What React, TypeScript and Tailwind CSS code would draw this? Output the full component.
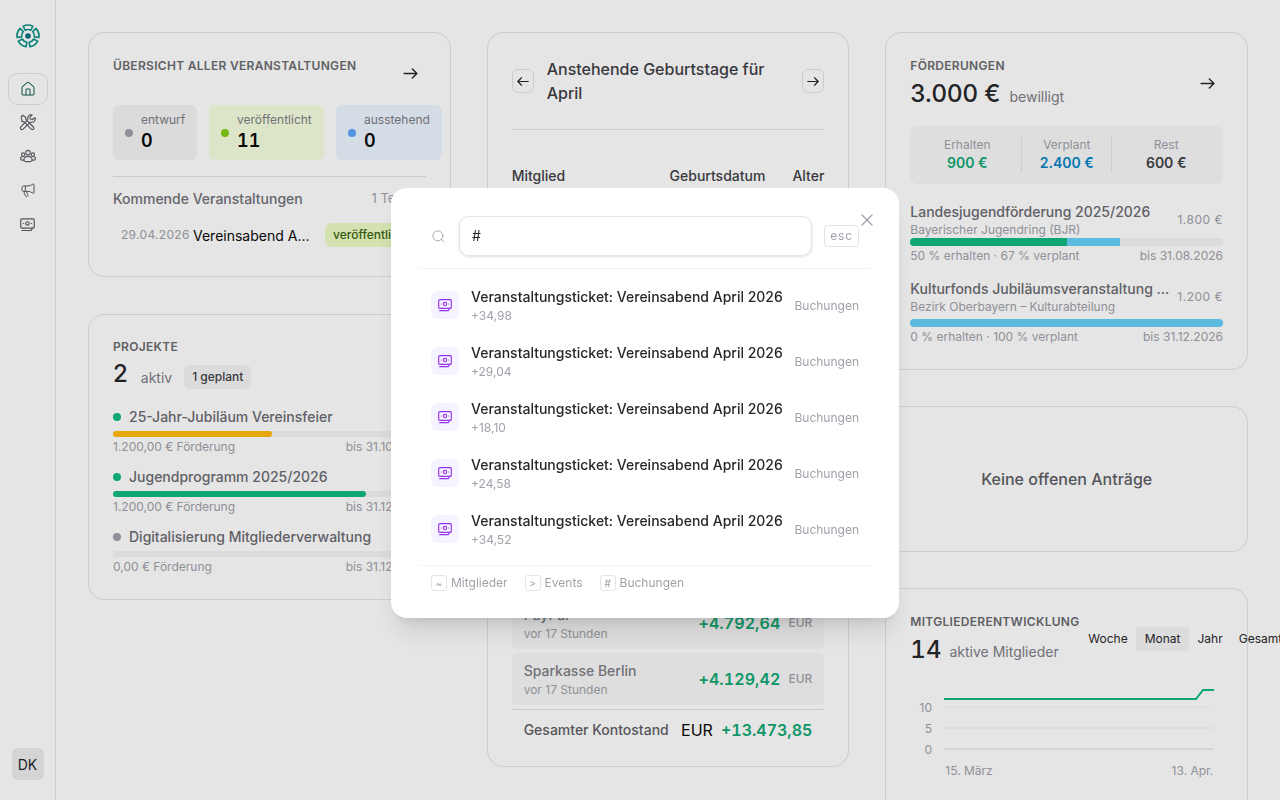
import { Home, Megaphone, Search, X } from "lucide-react";

const statusChips = [
  { label: "entwurf", value: "0", dot: "bg-[#a1a1aa]", bg: "bg-[#f4f4f5]", width: "w-[84px]" },
  { label: "veröffentlicht", value: "11", dot: "bg-[#84cc16]", bg: "bg-[#f7ffe0]", width: "w-[115px]" },
  { label: "ausstehend", value: "0", dot: "bg-[#60a5fa]", bg: "bg-[#edf6ff]", width: "w-[106px]" },
];

const projects = [
  { name: "25-Jahr-Jubiläum Vereinsfeier", funding: "1.200,00 € Förderung", due: "bis 31.10.2026", dot: "bg-[#10b981]", bar: "bg-[#ffba0b]", width: "w-[159px]" },
  { name: "Jugendprogramm 2025/2026", funding: "1.200,00 € Förderung", due: "bis 31.12.2026", dot: "bg-[#10b981]", bar: "bg-[#10b981]", width: "w-[253px]" },
  { name: "Digitalisierung Mitgliederverwaltung", funding: "0,00 € Förderung", due: "bis 31.12.2026", dot: "bg-[#a1a1aa]", bar: "bg-transparent", width: "w-0" },
];

const results = ["+34,98", "+29,04", "+18,10", "+24,58", "+34,52"];

// one hollow ring piece of the logo
function ringSegment(center: number, span: number) {
  const point = (radius: number, deg: number) => {
    const rad = (deg * Math.PI) / 180;
    return `${(12 + radius * Math.cos(rad)).toFixed(2)} ${(12 + radius * Math.sin(rad)).toFixed(2)}`;
  };
  const from = center - span / 2;
  const to = center + span / 2;
  return `M${point(11, from)}A11 11 0 0 1 ${point(11, to)}L${point(6.4, to)}A6.4 6.4 0 0 0 ${point(6.4, from)}Z`;
}

function Logo() {
  return (
    <svg width="24" height="24" viewBox="0 0 24 24" fill="none" stroke="#0c9088" strokeWidth="1.6" strokeLinejoin="round">
      <circle cx="12" cy="12" r="2.8" fill="#0e6f86" stroke="none" />
      {[-90, -18, 54, 126, 198].map((deg) => (
        <path key={deg} d={ringSegment(deg, 52)} />
      ))}
    </svg>
  );
}

function ArrowIcon({ className, left }: { className: string; left?: boolean }) {
  return (
    <svg className={className} viewBox="0 0 16 12" fill="none" stroke="currentColor" strokeWidth="1.5" strokeLinecap="round" strokeLinejoin="round">
      <path d={left ? "M15 6H1M6 1L1 6l5 5" : "M1 6h14M10 1l5 5-5 5"} />
    </svg>
  );
}

function ToolsIcon() {
  return (
    <svg width="18" height="18" viewBox="0 0 24 24" fill="none" stroke="currentColor" strokeWidth="1.5" strokeLinecap="round" strokeLinejoin="round">
      <path d="M3 5l2-2 4 3v2.500l10.500 10.500a2 2 0 0 1-2.800 2.800L6.500 11.500H4z" />
      <path d="M21.500 6.500a4.500 4.500 0 0 1-6 5.500L5.500 21.500a2 2 0 0 1-3-3L12 8.500a4.500 4.500 0 0 1 5.500-6l-3 3 .5 2.500 2.500.5z" />
    </svg>
  );
}

function GroupIcon() {
  return (
    <svg width="18" height="18" viewBox="0 0 24 24" fill="none" stroke="currentColor" strokeWidth="1.4" strokeLinecap="round" strokeLinejoin="round">
      <circle cx="12" cy="7.500" r="3" />
      <circle cx="5.500" cy="10" r="2.200" />
      <circle cx="18.500" cy="10" r="2.200" />
      <path d="M6.500 17.500c0-3 2.500-5 5.500-5s5.500 2 5.500 5c0 1-2.500 2-5.500 2s-5.500-1-5.500-2z" />
      <path d="M6.500 17.500H4.500C3 17.500 2 16.500 2 15.500c0-1.500 1.500-2.800 3.500-2.800M17.500 17.500h2c1.500 0 2.500-1 2.500-2 0-1.500-1.500-2.800-3.500-2.800" />
    </svg>
  );
}

function TicketIcon({ className }: { className: string }) {
  return (
    <svg className={className} viewBox="0 0 24 24" fill="none" stroke="currentColor" strokeWidth="1.7" strokeLinecap="round" strokeLinejoin="round">
      <rect x="2.500" y="4" width="19" height="13" rx="1.500" />
      <circle cx="12" cy="10.500" r="2.400" />
      <path d="M6.500 10.500h.01M17.500 10.500h.01M4 20.500h13l2-3.500" />
    </svg>
  );
}

function SectionTitle({ children }: { children: string }) {
  return <h3 className="text-[12px] leading-[16px] font-semibold tracking-[0.3px] text-[#6b6b70]">{children}</h3>;
}

function Sidebar() {
  return (
    <aside className="flex h-screen w-[56px] shrink-0 flex-col items-center border-r border-[#e4e4e7] pt-[24px] pb-[20px]">
      <Logo />
      <nav className="mt-[25px] flex flex-col items-center">
        <div className="flex h-[32px] w-[40px] items-center justify-center rounded-[10px] border border-[#e4e4e7] bg-white text-[#1f6a5d]">
          <Home size={16} strokeWidth={1.6} />
        </div>
        <div className="mt-[1px] flex h-[32px] items-center justify-center text-[#5f5f66]"><ToolsIcon /></div>
        <div className="mt-[2px] flex h-[32px] items-center justify-center text-[#5f5f66]"><GroupIcon /></div>
        <div className="mt-[2px] flex h-[32px] items-center justify-center text-[#5f5f66]"><Megaphone size={16} strokeWidth={1.5} /></div>
        <div className="mt-[2px] flex h-[32px] items-center justify-center text-[#5f5f66]"><TicketIcon className="h-[17px] w-[17px]" /></div>
      </nav>
      <div className="mt-auto flex h-[32px] w-[32px] items-center justify-center rounded-[6px] bg-[#ececec] text-[14px] text-[#27272a]">DK</div>
    </aside>
  );
}

function EventsCard() {
  return (
    <section className="h-[245px] overflow-hidden rounded-[16px] border border-[#e4e4e7] pt-[25px] pl-[24px]">
      <div className="flex items-start pr-[32px]">
        <SectionTitle>ÜBERSICHT ALLER VERANSTALTUNGEN</SectionTitle>
        <ArrowIcon className="mt-[10px] ml-auto h-[11px] w-[15px] text-[#27272a]" />
      </div>
      <div className="mt-[26px] flex gap-[12px]">
        {statusChips.map((chip) => (
          <div key={chip.label} className={`flex h-[55px] shrink-0 items-center gap-[8px] rounded-[6px] pl-[12px] ${chip.bg} ${chip.width}`}>
            <span className={`h-[8px] w-[8px] rounded-full ${chip.dot}`} />
            <div>
              <div className="text-[12px] leading-[16px] text-[#7d7d85]">{chip.label}</div>
              <div className="mt-[1px] text-[18px] leading-[24px] font-semibold text-[#09090b] tabular-nums">{chip.value}</div>
            </div>
          </div>
        ))}
      </div>
      <div className="mt-[16px] mr-[24px] border-t border-[#e4e4e7] pt-[12px]">
        <div className="flex items-center justify-between">
          <span className="text-[14px] leading-[20px] font-medium text-[#71717a]">Kommende Veranstaltungen</span>
          <span className="mr-[3px] text-[13px] text-[#a1a1aa]">1 Termin</span>
        </div>
        <div className="mt-[14px] flex items-center pl-[8px]">
          <span className="w-[72px] text-[12px] tracking-[0.3px] text-[#a1a1aa]">29.04.2026</span>
          <span className="w-[132px] text-[14px] text-[#09090b]">Vereinsabend A...</span>
          <span className="flex h-[24px] items-center rounded-[6px] bg-[#ebfcc4] px-[8px] text-[12px] font-medium text-[#3f6212]">veröffentlicht</span>
        </div>
      </div>
    </section>
  );
}

function ProjectsCard() {
  return (
    <section className="h-[286px] rounded-[16px] border border-[#e4e4e7] px-[24px] pt-[24px]">
      <SectionTitle>PROJEKTE</SectionTitle>
      <div className="mt-[3px] flex items-center">
        <span className="text-[24px] leading-[32px] font-medium text-[#27272a]">2</span>
        <span className="mt-[6px] ml-[13px] text-[14px] text-[#7d7d85]">aktiv</span>
        <span className="mt-[6px] ml-[12px] flex h-[24px] items-center rounded-[6px] bg-[#f4f4f5] px-[8px] text-[12px] font-medium text-[#3f3f46]">1 geplant</span>
      </div>
      <div className="mt-[17px] flex flex-col gap-[12px]">
        {projects.map((project) => (
          <div key={project.name}>
            <div className="flex items-center gap-[8px]">
              <span className={`h-[8px] w-[8px] rounded-full ${project.dot}`} />
              <span className="text-[14px] leading-[20px] font-medium text-[#6b6b72]">{project.name}</span>
            </div>
            <div className="mt-[4px] h-[6px] rounded-full bg-[#f4f4f5]">
              <div className={`h-full rounded-full ${project.bar} ${project.width}`} />
            </div>
            <div className="mt-[2px] flex justify-between text-[12px] leading-[16px] text-[#a1a1aa]">
              <span>{project.funding}</span>
              <span>{project.due}</span>
            </div>
          </div>
        ))}
      </div>
    </section>
  );
}

function BirthdaysCard() {
  return (
    <section className="flex h-[735px] flex-col rounded-[16px] border border-[#e4e4e7] px-[24px] pt-[24px]">
      <div className="flex items-center">
        <button className="flex h-[24px] w-[22px] shrink-0 items-center justify-center rounded-[6px] border border-[#e4e4e7] text-[#27272a]"><ArrowIcon left className="h-[9px] w-[12px]" /></button>
        <h2 className="mr-[12px] ml-[13px] flex-1 text-[16px] leading-[24px] font-medium text-[#3f3f46]">Anstehende Geburtstage für April</h2>
        <button className="flex h-[24px] w-[22px] shrink-0 items-center justify-center rounded-[6px] border border-[#e4e4e7] text-[#27272a]"><ArrowIcon className="h-[9px] w-[12px]" /></button>
      </div>
      <div className="mt-[24px] border-t border-[#e4e4e7]" />
      <div className="mt-[35px] flex text-[14px] font-medium text-[#3f3f46]">
        <span>Mitglied</span>
        <span className="ml-auto">Geburtsdatum</span>
        <span className="ml-[27px]">Alter</span>
      </div>
      <div className="mt-auto flex flex-col gap-[4px]">
        <BalanceRow name="PayPal" amount="+4.792,64" />
        <BalanceRow name="Sparkasse Berlin" amount="+4.129,42" />
      </div>
      <div className="mt-[4px] flex h-[40px] items-center border-t border-[#e4e4e7] px-[12px]">
        <span className="text-[14px] font-medium text-[#5f5f66]">Gesamter Kontostand</span>
        <span className="ml-auto text-[16px] text-[#09090b]">EUR</span>
        <span className="ml-[8px] text-[16px] font-semibold text-[#10a874] tabular-nums">+13.473,85</span>
      </div>
      <div className="h-[17px]" />
    </section>
  );
}

function BalanceRow({ name, amount }: { name: string; amount: string }) {
  return (
    <div className="flex h-[52px] items-center justify-between rounded-[6px] bg-[#f8f8f8] px-[12px]">
      <div>
        <div className="text-[14px] leading-[20px] font-medium text-[#7d7d85]">{name}</div>
        <div className="text-[12px] leading-[17px] text-[#a1a1aa]">vor 17 Stunden</div>
      </div>
      <div className="flex items-center gap-[8px]">
        <span className="text-[16px] font-semibold tracking-[0.1px] text-[#10a874] tabular-nums">{amount}</span>
        <span className="text-[12px] font-medium text-[#a1a1aa]">EUR</span>
      </div>
    </div>
  );
}

function FundingCard() {
  return (
    <section className="h-[338px] rounded-[16px] border border-[#e4e4e7] px-[24px] pt-[25px]">
      <SectionTitle>FÖRDERUNGEN</SectionTitle>
      <div className="mt-[4px] flex items-center">
        <span className="text-[24px] leading-[32px] font-medium text-[#27272a]">3.000 €</span>
        <span className="mt-[5px] ml-[9px] text-[14px] text-[#7d7d85]">bewilligt</span>
        <ArrowIcon className="mt-[-22px] mr-[8px] ml-auto h-[11px] w-[15px] text-[#27272a]" />
      </div>
      <div className="mt-[16px] flex h-[58px] items-center rounded-[8px] bg-[#f8f8f8]">
        <FundingStat label="Erhalten" value="900 €" color="text-[#10a874]" width="w-[111px] pl-[3px]" />
        <FundingStat label="Verplant" value="2.400 €" color="text-[#0284c7]" width="w-[90px]" border />
        <FundingStat label="Rest" value="600 €" color="text-[#3f3f46]" width="flex-1 pr-[3px]" border />
      </div>
      <FundingRow className="mt-[18px]" barGap="mt-0" name="Landesjugendförderung 2025/2026" org="Bayerischer Jugendring (BJR)" amount="1.800 €" left="50 % erhalten · 67 % verplant" due="bis 31.08.2026" received="w-[157px]" planned="w-[53px]" />
      <FundingRow className="mt-[15px]" barGap="mt-[4px]" name="Kulturfonds Jubiläumsveranstaltung ..." org="Bezirk Oberbayern – Kulturabteilung" amount="1.200 €" left="0 % erhalten · 100 % verplant" due="bis 31.12.2026" received="w-0" planned="flex-1" />
    </section>
  );
}

function FundingStat({ label, value, color, width, border }: { label: string; value: string; color: string; width: string; border?: boolean }) {
  return (
    <div className={`flex h-[36px] flex-col items-center justify-center ${width} ${border ? "border-l border-[#e4e4e7]" : ""}`}>
      <span className="text-[12px] leading-[16px] text-[#a1a1aa]">{label}</span>
      <span className={`text-[14px] leading-[20px] font-semibold ${color}`}>{value}</span>
    </div>
  );
}

function FundingRow(props: { className: string; barGap: string; name: string; org: string; amount: string; left: string; due: string; received: string; planned: string }) {
  return (
    <div className={props.className}>
      <div className="flex items-center justify-between">
        <div>
          <div className="text-[14px] leading-[20px] font-medium text-[#6b6b72]">{props.name}</div>
          <div className="text-[12px] leading-[16px] text-[#a1a1aa]">{props.org}</div>
        </div>
        <span className="text-[12px] tracking-[0.5px] text-[#a1a1aa]">{props.amount}</span>
      </div>
      <div className={`flex h-[8px] overflow-hidden rounded-full bg-[#f4f4f5] ${props.barGap}`}>
        <div className={`h-full bg-[#10b981] ${props.received}`} />
        <div className={`h-full bg-[#67d0f8] ${props.planned}`} />
      </div>
      <div className="mt-[2px] flex justify-between text-[12px] leading-[16px] text-[#a1a1aa]">
        <span>{props.left}</span>
        <span>{props.due}</span>
      </div>
    </div>
  );
}

function MembersCard() {
  return (
    <section className="relative h-[300px] rounded-[16px] border border-[#e4e4e7] px-[24px] pt-[25px]">
      <SectionTitle>MITGLIEDERENTWICKLUNG</SectionTitle>
      <div className="mt-[4px] flex items-center">
        <span className="text-[24px] leading-[32px] font-medium text-[#27272a] tabular-nums">14</span>
        <span className="mt-[3px] ml-[8px] text-[14px] text-[#7d7d85]">aktive Mitglieder</span>
      </div>
      <div className="absolute top-[38px] left-[192px] flex h-[24px] items-center text-[12px] whitespace-nowrap text-[#27272a]">
        <span className="pr-[8px] pl-[10px]">Woche</span>
        <span className="flex h-[24px] items-center bg-[#f5f5f5] px-[9px]">Monat</span>
        <span className="px-[8px]">Jahr</span>
        <span className="pl-[8px]">Gesamt</span>
      </div>
      <svg className="mt-[-3px] block" width="310" height="98" viewBox="0 0 310 98">
        <line x1="34" y1="44" x2="303" y2="44" stroke="#f4f4f4" />
        <line x1="34" y1="65" x2="303" y2="65" stroke="#f0f0f0" />
        <line x1="34" y1="86" x2="303" y2="86" stroke="#dadada" />
        <path d="M34 36H286L293 27H304" fill="none" stroke="#10b981" strokeWidth="2" />
        <text x="22" y="49" textAnchor="end" fontSize="12" fill="#a1a1aa">10</text>
        <text x="22" y="70" textAnchor="end" fontSize="12" fill="#a1a1aa">5</text>
        <text x="22" y="91" textAnchor="end" fontSize="12" fill="#a1a1aa">0</text>
      </svg>
      <div className="mt-[2px] flex w-[303px] justify-between pl-[35px] text-[12px] leading-[16px] text-[#a1a1aa]">
        <span>15. März</span>
        <span>13. Apr.</span>
      </div>
    </section>
  );
}

function SearchModal() {
  return (
    <div className="fixed inset-0 z-10 bg-black/10">
      <div className="absolute top-[188px] left-[391px] w-[508px] rounded-[16px] bg-white px-[28px] pt-[28px] pb-[26px] shadow-xl">
        <X size={20} strokeWidth={1.5} className="absolute top-[22px] right-[22px] text-[#a1a1aa]" />
        <div className="flex items-center">
          <Search size={15} strokeWidth={1.4} className="ml-[12px] text-[#a1a1aa]" />
          <div className="ml-[13px] flex h-[40px] w-[353px] items-center rounded-[10px] border border-[#e4e4e7] px-[12px] text-[14px] leading-[18px] text-[#27272a] shadow-sm">#</div>
          <span className="ml-[12px] flex h-[22px] w-[35px] items-center justify-center rounded-[4px] border border-[#e4e4e7] text-[12px] tracking-[0.8px] text-[#a1a1aa]">esc</span>
        </div>
        <div className="mt-[12px] border-t border-[#f4f4f5]" />
        <div className="mt-[8px] flex flex-col">
          {results.map((amount) => (
            <div key={amount} className="flex h-[56px] items-center px-[12px]">
              <div className="flex h-[28px] w-[28px] items-center justify-center rounded-[6px] bg-[#f5f3ff] text-[#9333ea]">
                <TicketIcon className="h-[16px] w-[16px]" />
              </div>
              <div className="ml-[12px] flex-1">
                <div className="text-[14px] leading-[20px] font-medium text-[#27272a]">Veranstaltungsticket: Vereinsabend April 2026</div>
                <div className="mt-[1px] text-[12px] leading-[16px] text-[#a1a1aa]">{amount}</div>
              </div>
              <span className="mt-[2px] text-[12px] text-[#a1a1aa]">Buchungen</span>
            </div>
          ))}
        </div>
        <div className="mt-[8px] flex items-center gap-[17px] border-t border-[#f4f4f5] pt-[8px] pl-[12px] text-[12px] text-[#a1a1aa]">
          <FooterHint glyph="~" label="Mitglieder" />
          <FooterHint glyph=">" label="Events" />
          <FooterHint glyph="#" label="Buchungen" />
        </div>
      </div>
    </div>
  );
}

function FooterHint({ glyph, label }: { glyph: string; label: string }) {
  return (
    <span className="flex items-center gap-[4px]">
      <span className="flex h-[16px] w-[16px] items-center justify-center rounded-[3px] border border-[#e4e4e7] text-[10px]">{glyph}</span>
      {label}
    </span>
  );
}

export default function App() {
  return (
    <div className="flex h-screen overflow-hidden bg-white font-['Inter',sans-serif]">
      <Sidebar />
      <main className="grid flex-1 grid-cols-3 items-start gap-x-[36px] px-[32px] pt-[32px]">
        <div className="flex flex-col gap-[37px]">
          <EventsCard />
          <ProjectsCard />
        </div>
        <BirthdaysCard />
        <div className="flex flex-col gap-[36px]">
          <FundingCard />
          <section className="flex h-[146px] items-center justify-center rounded-[16px] border border-[#e4e4e7] text-[16px] font-medium text-[#5f5f66]">
            Keine offenen Anträge
          </section>
          <MembersCard />
        </div>
      </main>
      <SearchModal />
    </div>
  );
}
